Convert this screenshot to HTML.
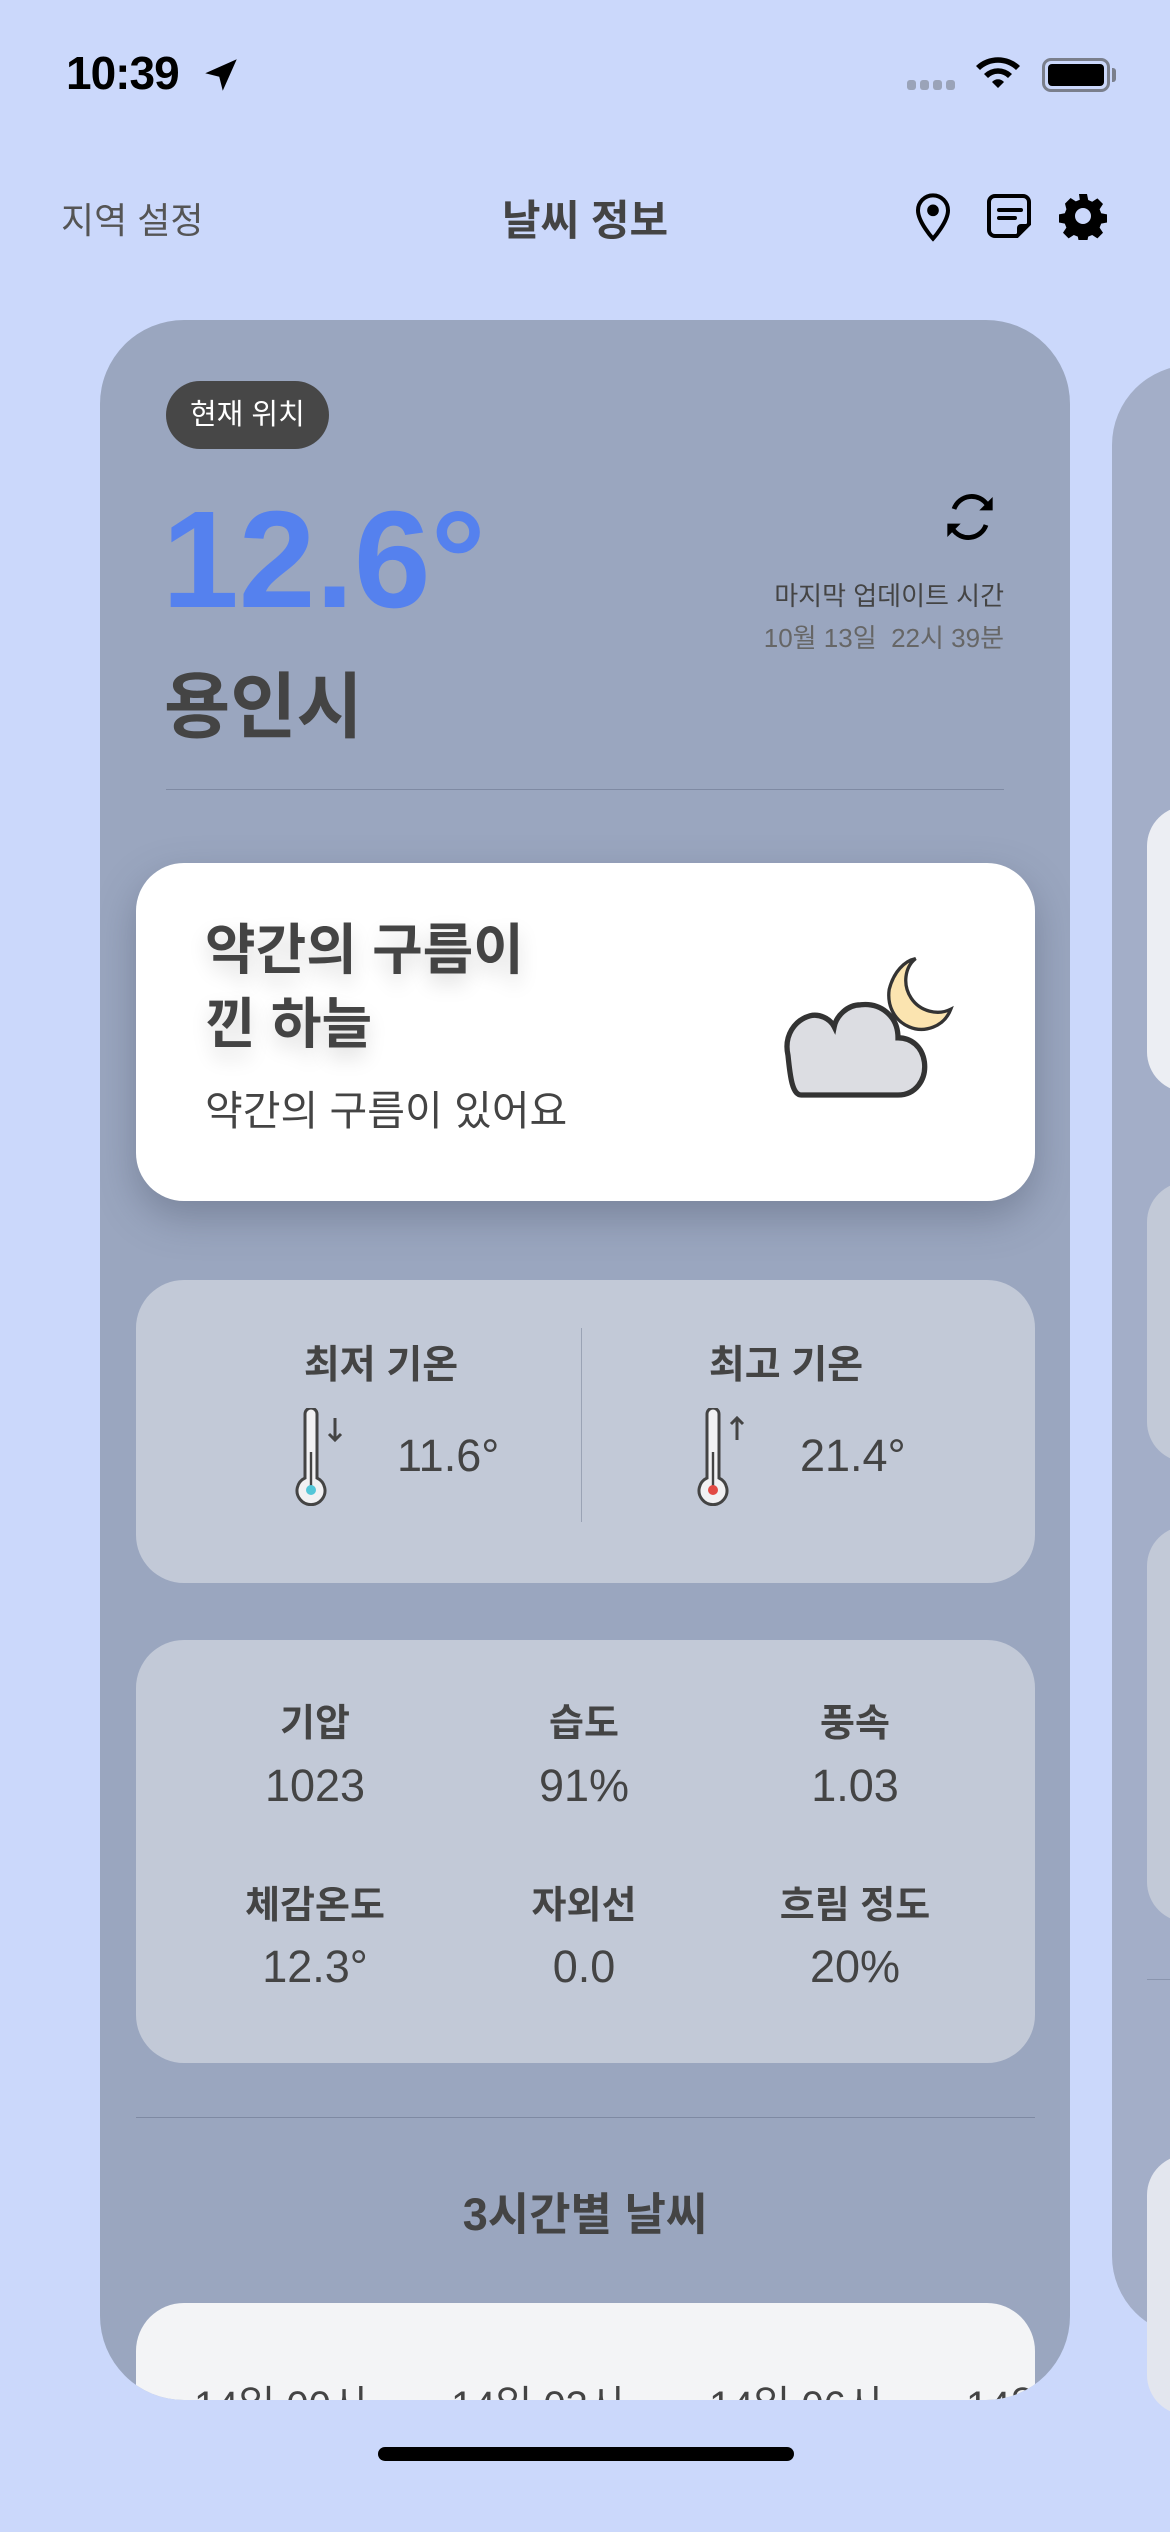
<!DOCTYPE html>
<html><head><meta charset="utf-8"><style>
*{margin:0;padding:0;box-sizing:border-box}
body{width:1170px;height:2532px;background:#cbd8fb;position:relative;overflow:hidden;font-family:"Liberation Sans","Noto Sans CJK KR",sans-serif;color:#444}
.a{position:absolute}
.card{left:100px;top:320px;width:970px;height:2080px;background:#9aa6bf;border-radius:84px;overflow:hidden}
.c2{left:1112px;top:365px;width:200px;height:1971px;background:#a3aec8;border-radius:80px}
.tile{left:1147px;width:200px;border-radius:40px}
.ctr{text-align:center}
</style></head><body>
<div class="a" style="left:66px;top:46px;font-size:46px;font-weight:600;color:#000;letter-spacing:-1px">10:39</div>
<svg class="a" style="left:200px;top:54px" width="42" height="42" viewBox="0 0 24 24"><path d="M3 11L21 3 13 21 11 13z" fill="#000"/></svg>
<div class="a" style="left:907px;top:80px;width:48px;height:10px;display:flex;gap:4px"><i style="flex:1;background:#9aa3b8;border-radius:3px"></i><i style="flex:1;background:#9aa3b8;border-radius:3px"></i><i style="flex:1;background:#9aa3b8;border-radius:3px"></i><i style="flex:1;background:#9aa3b8;border-radius:3px"></i></div>
<svg class="a" style="left:974px;top:52px" width="48" height="40" viewBox="0 0 24 20"><path d="M1 7a16 16 0 0 1 22 0l-2 2a13 13 0 0 0-18 0z M5 11a10 10 0 0 1 14 0l-2 2a7 7 0 0 0-10 0z M9 15a4 4 0 0 1 6 0l-3 3z" fill="#000"/></svg>
<div class="a" style="left:1042px;top:58px;width:68px;height:34px;border:3px solid #7a7f8c;border-radius:9px;padding:3px"><div style="width:100%;height:100%;background:#000;border-radius:4px"></div></div>
<div class="a" style="left:1112px;top:68px;width:4px;height:14px;background:#7a7f8c;border-radius:0 3px 3px 0"></div>

<div class="a" style="left:61px;top:192px;font-size:36px;color:#555">지역 설정</div>
<div class="a ctr" style="left:435px;top:187px;width:300px;font-size:42px;font-weight:700;color:#444">날씨 정보</div>
<svg class="a" style="left:913px;top:192px" width="40" height="50" viewBox="0 0 24 30"><path d="M12 2a9 9 0 0 0-9 9c0 7 9 17 9 17s9-10 9-17a9 9 0 0 0-9-9z" fill="none" stroke="#000" stroke-width="2.4"/><circle cx="12" cy="11" r="3.5" fill="#000"/></svg>
<svg class="a" style="left:985px;top:192px" width="48" height="48" viewBox="0 0 24 24"><path d="M5 2h14a3 3 0 0 1 3 3v11l-6 6H5a3 3 0 0 1-3-3V5a3 3 0 0 1 3-3z" fill="none" stroke="#000" stroke-width="2"/><path d="M22 16h-4a2 2 0 0 0-2 2v4z" fill="#000"/><path d="M7 9h11M7 13h8" stroke="#000" stroke-width="2" stroke-linecap="round"/></svg>
<svg class="a" style="left:1059px;top:192px" width="48" height="48" viewBox="0 0 24 24"><path fill="#000" fill-rule="evenodd" d="M10 1h4l.6 3 2 .9 2.6-1.7 2.8 2.8-1.7 2.6.8 2 3 .6v4l-3 .6-.8 2 1.7 2.6-2.8 2.8-2.6-1.7-2 .8-.6 3h-4l-.6-3-2-.8-2.6 1.7-2.8-2.8 1.7-2.6-.8-2-3-.6v-4l3-.6.8-2L3 5.8 5.8 3l2.6 1.7 2-.8zM12 8a4 4 0 1 0 0 8 4 4 0 0 0 0-8z"/></svg>

<div class="a c2"></div>
<div class="a tile" style="top:806px;height:286px;background:#eceef3"></div>
<div class="a tile" style="top:1182px;height:280px;background:#c2c9d7"></div>
<div class="a tile" style="top:1526px;height:396px;background:#c2c9d7"></div>
<div class="a" style="left:1147px;top:1979px;width:30px;height:1px;background:#8a95ae"></div>
<div class="a tile" style="top:2155px;height:260px;background:#e3e6ee"></div>

<div class="a card">
 <div class="a" style="left:66px;top:61px;height:68px;padding:0 24px;background:#474747;border-radius:34px;color:#fff;font-size:29px;line-height:68px">현재 위치</div>
 <div class="a" style="left:62px;top:160px;font-size:138px;font-weight:700;color:#5581ee;letter-spacing:0px;line-height:160px">12.6°</div>
 <svg class="a" style="left:836px;top:165px" width="68" height="64" viewBox="0 0 24 24"><path d="M6 9a7 7 0 0 1 12.5-1.5M18 15a7 7 0 0 1-12.5 1.5" fill="none" stroke="#000" stroke-width="1.8"/><path d="M20.5 4.5v5h-5z" fill="#000"/><path d="M3.5 19.5v-5h5z" fill="#000"/></svg>
 <div class="a" style="right:66px;top:256px;font-size:26px;color:#444">마지막 업데이트 시간</div>
 <div class="a" style="right:66px;top:298px;font-size:26px;color:#666;white-space:pre">10월 13일  22시 39분</div>
 <div class="a" style="left:64px;top:328px;font-size:72px;font-weight:700;color:#444">용인시</div>
 <div class="a" style="left:66px;top:469px;width:838px;height:1px;background:#7f8aa3"></div>

 <div class="a" style="left:36px;top:543px;width:899px;height:338px;background:#fff;border-radius:48px;box-shadow:0 16px 40px rgba(60,70,90,.35)">
  <div class="a" style="left:69px;top:50px;font-size:55px;font-weight:700;line-height:74px;color:#444;text-shadow:0 10px 20px rgba(0,0,0,.15)">약간의 구름이<br>낀 하늘</div>
  <div class="a" style="left:69px;top:214px;font-size:41px;color:#444">약간의 구름이 있어요</div>
  <svg class="a" style="left:630px;top:78px" width="220" height="176" viewBox="0 0 100 80"><path d="M68 8c-5 4-6 12-2 18s12 8 18 5c-3 8-12 11-19 8s-10-10-9-17c2-8 7-13 12-14z" fill="#fbe4b0" stroke="#333" stroke-width="1.5"/><path d="M16 70h44c8 0 13-7 12-15-1-7-6-11-12-11 0-10-8-16-17-15-6 0-11 5-12 10-2-4-7-6-11-5-7 2-12 9-10 18 1 10 2 18 6 18z" fill="#dcdde2" stroke="#333" stroke-width="2.4"/></svg>
 </div>

 <div class="a" style="left:36px;top:960px;width:899px;height:303px;background:#c2c9d7;border-radius:48px">
  <div class="a" style="left:445px;top:48px;width:1px;height:194px;background:#9aa3b5"></div>
  <div class="a ctr" style="left:145px;top:54px;width:200px;font-size:39px;font-weight:700">최저 기온</div>
  <div class="a ctr" style="left:550px;top:54px;width:200px;font-size:39px;font-weight:700">최고 기온</div>
  <svg class="a" style="left:155px;top:128px" width="60" height="98" viewBox="0 0 30 49"><path d="M7 3a3 3 0 0 1 6 0v32a7 7 0 1 1-6 0z" fill="#f1f1f3" stroke="#444" stroke-width="1.5"/><path d="M10 22v17" stroke="#444" stroke-width="1.2"/><circle cx="10" cy="41" r="2.5" fill="#53c6d8"/><path d="M22 5v11M19 13l3 3 3-3" fill="none" stroke="#444" stroke-width="1.5"/></svg>
  <svg class="a" style="left:557px;top:128px" width="60" height="98" viewBox="0 0 30 49"><path d="M7 3a3 3 0 0 1 6 0v32a7 7 0 1 1-6 0z" fill="#f1f1f3" stroke="#444" stroke-width="1.5"/><path d="M10 22v17" stroke="#444" stroke-width="1.2"/><circle cx="10" cy="41" r="2.5" fill="#e24a44"/><path d="M22 16V5M19 8l3-3 3 3" fill="none" stroke="#444" stroke-width="1.5"/></svg>
  <div class="a" style="left:261px;top:150px;font-size:45px">11.6°</div>
  <div class="a" style="left:664px;top:150px;font-size:45px">21.4°</div>
 </div>

 <div class="a" style="left:36px;top:1320px;width:899px;height:423px;background:#c2c9d7;border-radius:48px">
  <div class="a ctr" style="left:29px;top:52px;width:300px;font-size:38px;font-weight:700">기압</div>
  <div class="a ctr" style="left:298px;top:52px;width:300px;font-size:38px;font-weight:700">습도</div>
  <div class="a ctr" style="left:569px;top:52px;width:300px;font-size:38px;font-weight:700">풍속</div>
  <div class="a ctr" style="left:29px;top:120px;width:300px;font-size:45px">1023</div>
  <div class="a ctr" style="left:298px;top:120px;width:300px;font-size:45px">91%</div>
  <div class="a ctr" style="left:569px;top:120px;width:300px;font-size:45px">1.03</div>
  <div class="a ctr" style="left:29px;top:234px;width:300px;font-size:38px;font-weight:700">체감온도</div>
  <div class="a ctr" style="left:298px;top:234px;width:300px;font-size:38px;font-weight:700">자외선</div>
  <div class="a ctr" style="left:569px;top:234px;width:300px;font-size:38px;font-weight:700">흐림 정도</div>
  <div class="a ctr" style="left:29px;top:301px;width:300px;font-size:45px">12.3°</div>
  <div class="a ctr" style="left:298px;top:301px;width:300px;font-size:45px">0.0</div>
  <div class="a ctr" style="left:569px;top:301px;width:300px;font-size:45px">20%</div>
 </div>

 <div class="a" style="left:36px;top:1797px;width:899px;height:1px;background:#7f8aa3"></div>
 <div class="a ctr" style="left:185px;top:1858px;width:600px;font-size:45px;font-weight:700">3시간별 날씨</div>
 <div class="a" style="left:36px;top:1983px;width:899px;height:300px;background:#f3f4f6;border-radius:48px">
  <div class="a" style="left:58px;top:70px;font-size:40px;white-space:nowrap;color:#444">14일 00시</div>
  <div class="a" style="left:315px;top:70px;font-size:40px;white-space:nowrap;color:#444">14일 03시</div>
  <div class="a" style="left:573px;top:70px;font-size:40px;white-space:nowrap;color:#444">14일 06시</div>
  <div class="a" style="left:830px;top:70px;font-size:40px;white-space:nowrap;color:#444">14일</div>
 </div>
</div>

<div class="a" style="left:378px;top:2447px;width:416px;height:14px;background:#000;border-radius:7px"></div>
</body></html>
